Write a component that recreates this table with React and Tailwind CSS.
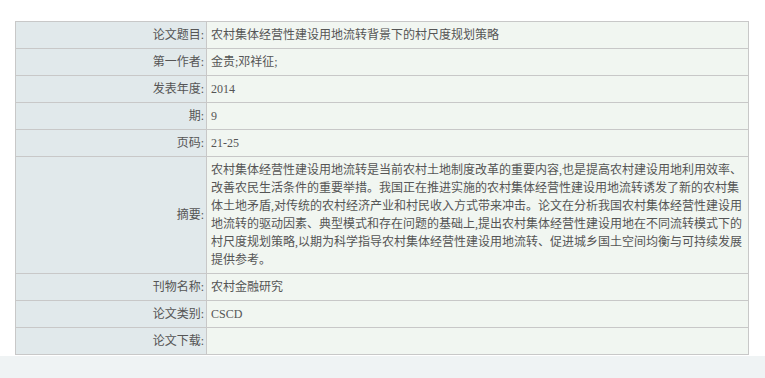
const rows = [
  { label: "论文题目", value: "农村集体经营性建设用地流转背景下的村尺度规划策略" },
  { label: "第一作者", value: "金贵;邓祥征;" },
  { label: "发表年度", value: "2014" },
  { label: "期", value: "9" },
  { label: "页码", value: "21-25" },
  {
    label: "摘要",
    value:
      "农村集体经营性建设用地流转是当前农村土地制度改革的重要内容,也是提高农村建设用地利用效率、改善农民生活条件的重要举措。我国正在推进实施的农村集体经营性建设用地流转诱发了新的农村集体土地矛盾,对传统的农村经济产业和村民收入方式带来冲击。论文在分析我国农村集体经营性建设用地流转的驱动因素、典型模式和存在问题的基础上,提出农村集体经营性建设用地在不同流转模式下的村尺度规划策略,以期为科学指导农村集体经营性建设用地流转、促进城乡国土空间均衡与可持续发展提供参考。",
    tall: true,
  },
  { label: "刊物名称", value: "农村金融研究" },
  { label: "论文类别", value: "CSCD" },
  { label: "论文下载", value: "" },
];

export default function App() {
  return (
    <div
      className="w-[765px] h-[378px] overflow-hidden bg-white text-[12px] text-[#555]"
      style={{ fontFamily: '"Liberation Serif", "Noto Sans CJK SC", serif' }}
    >
      <div className="ml-[15px] mt-[21px] w-[734px] border border-[#c8c8c8]">
        {rows.map((row, i) => (
          <div
            key={row.label}
            className={`flex ${i < rows.length - 1 ? "border-b border-[#c8c8c8]" : ""}`}
          >
            {/* label */}
            <div
              className={`w-[191px] shrink-0 border-r border-[#c8c8c8] bg-[#e1e9eb] flex items-center justify-end pr-[2px] ${
                row.tall ? "h-[116px]" : "h-[26px]"
              }`}
            >
              {row.label}:
            </div>
            {/* value */}
            <div
              className={`flex-1 bg-[#f1f6f1] pl-[4px] pr-[3px] ${
                row.tall ? "h-[116px] py-[4px] leading-[18px]" : "h-[26px] flex items-center"
              }`}
            >
              {row.value}
            </div>
          </div>
        ))}
      </div>
      <div className="mt-px h-[40px] bg-[#eff3f4]"></div>
    </div>
  );
}
